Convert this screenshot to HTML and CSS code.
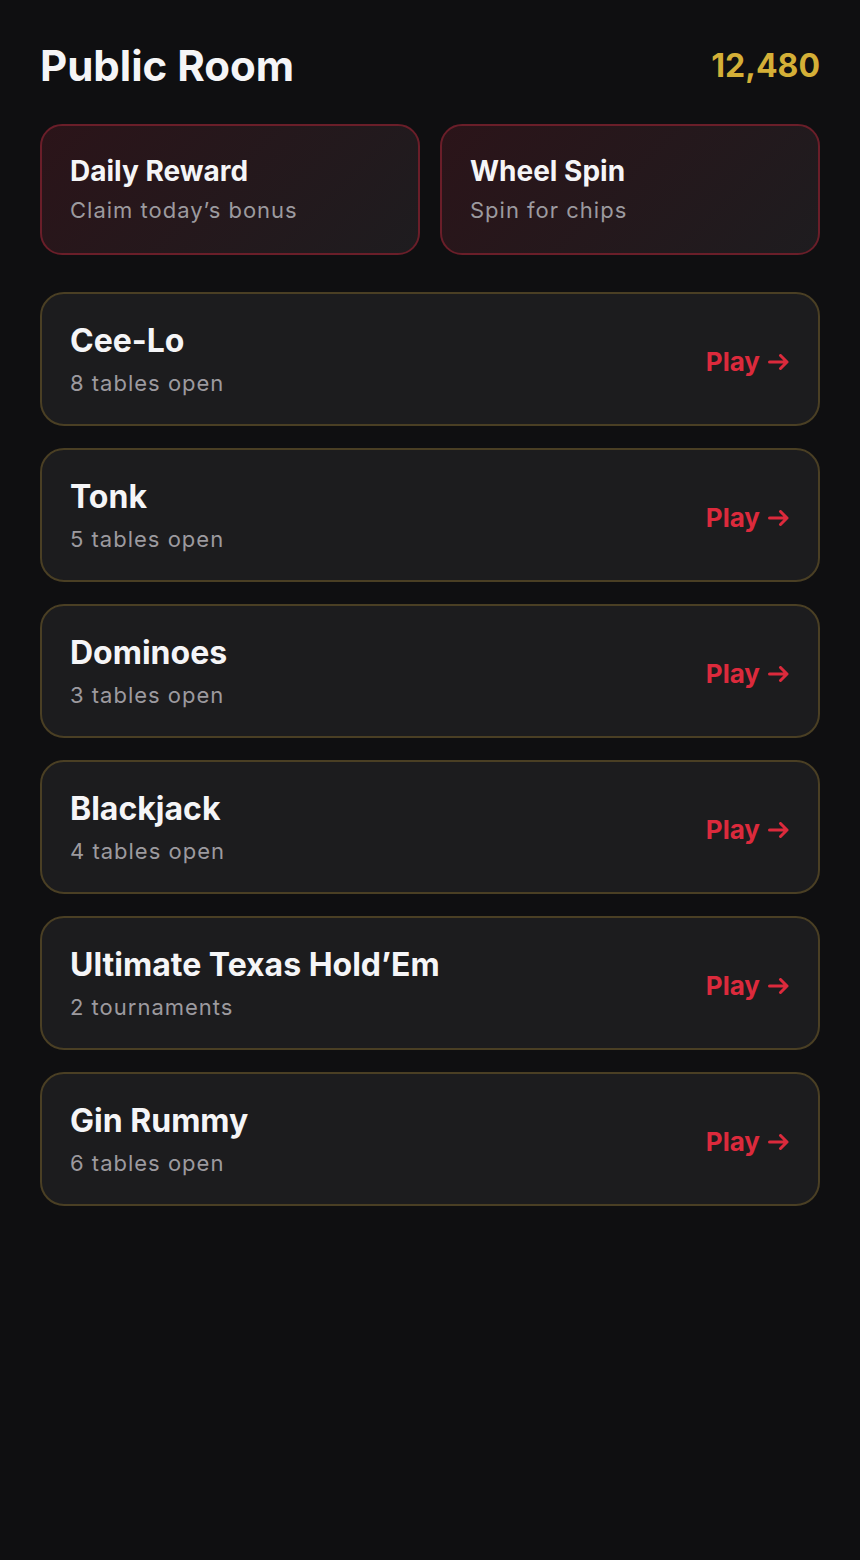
FILE: index.html
```html
<!DOCTYPE html>
<html>
    <head>
        <meta name="viewport" content="width=device-width, initial-scale=1.0">
        <meta charset="utf-8">
        <title>Public Room</title>
        <link rel="stylesheet" href="styles.css">
    </head>
    <body>
        <div class="page">
            <div class="header">
                <div class="title">Public Room</div>
                <div class="balance">12,480</div>
            </div>

            <div class="promos">
                <div class="promo">
                    <div class="promo-title">Daily Reward</div>
                    <div class="promo-sub">Claim today’s bonus</div>
                </div>
                <div class="promo">
                    <div class="promo-title">Wheel Spin</div>
                    <div class="promo-sub">Spin for chips</div>
                </div>
            </div>

            <div class="games">
                <div class="game">
                    <div class="game-info">
                        <div class="game-name">Cee-Lo</div>
                        <div class="game-sub">8 tables open</div>
                    </div>
                    <div class="play">Play <svg width="22" height="16" viewBox="0 0 22 16"><path d="M1.5 8H19M12.5 1.5L19 8l-6.5 6.5" fill="none" stroke="currentColor" stroke-width="3" stroke-linecap="round" stroke-linejoin="round"/></svg></div>
                </div>
                <div class="game">
                    <div class="game-info">
                        <div class="game-name">Tonk</div>
                        <div class="game-sub">5 tables open</div>
                    </div>
                    <div class="play">Play <svg width="22" height="16" viewBox="0 0 22 16"><path d="M1.5 8H19M12.5 1.5L19 8l-6.5 6.5" fill="none" stroke="currentColor" stroke-width="3" stroke-linecap="round" stroke-linejoin="round"/></svg></div>
                </div>
                <div class="game">
                    <div class="game-info">
                        <div class="game-name">Dominoes</div>
                        <div class="game-sub">3 tables open</div>
                    </div>
                    <div class="play">Play <svg width="22" height="16" viewBox="0 0 22 16"><path d="M1.5 8H19M12.5 1.5L19 8l-6.5 6.5" fill="none" stroke="currentColor" stroke-width="3" stroke-linecap="round" stroke-linejoin="round"/></svg></div>
                </div>
                <div class="game">
                    <div class="game-info">
                        <div class="game-name">Blackjack</div>
                        <div class="game-sub">4 tables open</div>
                    </div>
                    <div class="play">Play <svg width="22" height="16" viewBox="0 0 22 16"><path d="M1.5 8H19M12.5 1.5L19 8l-6.5 6.5" fill="none" stroke="currentColor" stroke-width="3" stroke-linecap="round" stroke-linejoin="round"/></svg></div>
                </div>
                <div class="game">
                    <div class="game-info">
                        <div class="game-name">Ultimate Texas Hold’Em</div>
                        <div class="game-sub">2 tournaments</div>
                    </div>
                    <div class="play">Play <svg width="22" height="16" viewBox="0 0 22 16"><path d="M1.5 8H19M12.5 1.5L19 8l-6.5 6.5" fill="none" stroke="currentColor" stroke-width="3" stroke-linecap="round" stroke-linejoin="round"/></svg></div>
                </div>
                <div class="game">
                    <div class="game-info">
                        <div class="game-name">Gin Rummy</div>
                        <div class="game-sub">6 tables open</div>
                    </div>
                    <div class="play">Play <svg width="22" height="16" viewBox="0 0 22 16"><path d="M1.5 8H19M12.5 1.5L19 8l-6.5 6.5" fill="none" stroke="currentColor" stroke-width="3" stroke-linecap="round" stroke-linejoin="round"/></svg></div>
                </div>
            </div>
        </div>
    </body>
</html>
```

FILE: styles.css
```css
html, body{
    margin:0;
    padding:0;
    background-color:#0f0f11;
}
body{
    font-family: Inter, "Noto Sans", sans-serif;
    color:#f5f5f7;
    min-height:1560px;
}
.page{
    padding:40px;
}
.header{
    display:flex;
    justify-content: space-between;
    align-items: center;
    height:52px;
}
.title{
    font-size:42px;
    font-weight:700;
    line-height:50px;
}
.balance{
    font-size:32px;
    font-weight:700;
    color:#d4af37;
    line-height:40px;
}
.promos{
    margin-top:32px;
    display:grid;
    grid-template-columns: 1fr 1fr;
    gap:20px;
}
.promo{
    border:2px solid #6a1e29;
    border-radius:22px;
    background: linear-gradient(135deg, #2b1419 0%, #1e1c1f 100%);
    padding:28px 28px 28px;
}
.promo-title{
    font-size:28px;
    font-weight:700;
    line-height:34px;
}
.promo-sub{
    font-size:22px;
    color:#9c9a9f;
    line-height:30px;
    margin-top:7px;
    letter-spacing:1px;
}
.games{
    margin-top:37px;
    display:flex;
    flex-direction: column;
    gap:22px;
}
.game{
    display:flex;
    align-items: center;
    justify-content: space-between;
    background-color:#1c1c1e;
    border:2px solid #4a3f24;
    border-radius:24px;
    padding:30px 28px 26px;
}
.game-name{
    font-size:32px;
    font-weight:700;
    line-height:34px;
}
.game-sub{
    font-size:22px;
    color:#9c9a9f;
    line-height:30px;
    margin-top:10px;
    letter-spacing:1px;
}
.play{
    display:flex;
    align-items: center;
    gap:8px;
    color:#dc2a3c;
    font-size:26px;
    font-weight:700;
}
.play svg{
    margin-top:2px;
}
```
